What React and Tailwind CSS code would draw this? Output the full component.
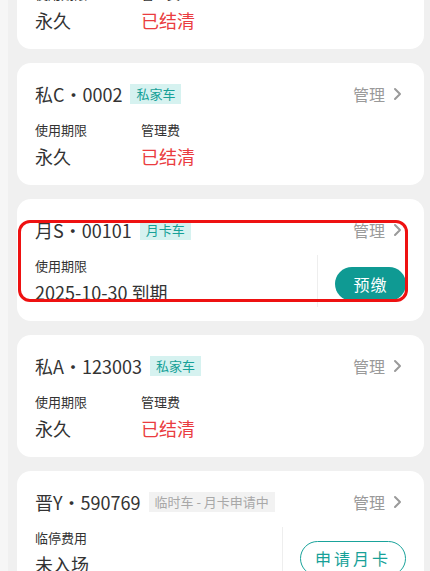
const cars = [
  { plate: "私B・0001", tag: "私家车", kind: "owned", label: "使用期限", value: "永久", fee: "已结清" },
  { plate: "私C・0002", tag: "私家车", kind: "owned", label: "使用期限", value: "永久", fee: "已结清" },
  { plate: "月S・00101", tag: "月卡车", kind: "monthly", label: "使用期限", value: "2025-10-30 到期", action: "预缴", marked: true },
  { plate: "私A・123003", tag: "私家车", kind: "owned", label: "使用期限", value: "永久", fee: "已结清" },
  { plate: "晋Y・590769", tag: "临时车 - 月卡申请中", kind: "temp", label: "临停费用", value: "未入场", action: "申请月卡" },
];

function Chevron() {
  return (
    <svg width="9" height="14" viewBox="0 0 9 14" fill="none" className="ml-[8px]">
      <path d="M2 2l5 5-5 5" stroke="#9a9a9a" strokeWidth="2" strokeLinecap="round" strokeLinejoin="round" />
    </svg>
  );
}

function Tag({ kind, children }) {
  if (kind === "temp") {
    return (
      <span className="ml-[8px] h-[20px] px-[6px] flex items-center whitespace-nowrap bg-[#f2f2f2] text-[#a8a8a8] text-[13px]">
        {children}
      </span>
    );
  }
  return (
    <span className="ml-[8px] h-[20px] px-[6px] flex items-center whitespace-nowrap bg-[#d6f2f0] text-[#17a198] text-[13px]">
      {children}
    </span>
  );
}

function CarCard({ car }) {
  return (
    <div className="relative bg-white rounded-[14px] px-[18px] pt-[19px] pb-[16px]">
      {/* 头部 */}
      <div className="flex items-center h-[24px]">
        <span className="text-[18px] text-[#333] leading-[24px] whitespace-nowrap">{car.plate}</span>
        <Tag kind={car.kind}>{car.tag}</Tag>
        <div className="ml-auto flex items-center pr-[4px]">
          <span className="text-[16px] text-[#9a9a9a]">管理</span>
          <Chevron />
        </div>
      </div>

      {/* 信息 */}
      <div className="flex mt-[15px]">
        <div className="flex-1 flex">
          <div className="min-w-[106px] whitespace-nowrap">
            <div className="text-[13px] leading-[18px] text-[#333]">{car.label}</div>
            <div className="mt-[4px] text-[18px] leading-[26px] text-[#333]">{car.value}</div>
          </div>
          {car.fee ? (
            <div className="whitespace-nowrap">
              <div className="text-[13px] leading-[18px] text-[#333]">管理费</div>
              <div className="mt-[4px] text-[18px] leading-[26px] text-[#ea3c40]">{car.fee}</div>
            </div>
          ) : null}
        </div>
        {car.action ? (
          <div className="border-l border-[#eeeeee] pl-[17px] flex items-center -mt-[2px] -mb-[2px]">
            {car.kind === "monthly" ? (
              <button
                type="button"
                className="h-[34px] w-[71px] rounded-full bg-[#0f9a93] text-white text-[16px] tracking-[1px] mt-[5px]"
              >
                {car.action}
              </button>
            ) : (
              <button
                type="button"
                className="h-[35px] w-[106px] rounded-full border-[1.5px] border-[#1aa39b] text-[#17a198] text-[16px] tracking-[3px] mt-[10px]"
              >
                {car.action}
              </button>
            )}
          </div>
        ) : null}
      </div>

      {car.marked ? (
        <div className="absolute left-[1px] right-[16px] top-[21px] h-[82px] rounded-[12px] border-[3px] border-[#ee1111] pointer-events-none" />
      ) : null}
    </div>
  );
}

export default function App() {
  return (
    <div
      className="h-[571px] overflow-hidden bg-[#f0f0f0]"
      style={{ fontFamily: '"Noto Sans CJK SC", "Noto Sans", sans-serif' }}
    >
      <div className="flex h-full">
        <div className="w-[8px] bg-[#f6f6f6]" />
        <div className="flex-1 pl-[9px] pr-[6px]">
          <div className="-mt-[73px] flex flex-col gap-[14px]">
            {cars.map((c) => (
              <CarCard key={c.plate} car={c} />
            ))}
          </div>
        </div>
      </div>
    </div>
  );
}
